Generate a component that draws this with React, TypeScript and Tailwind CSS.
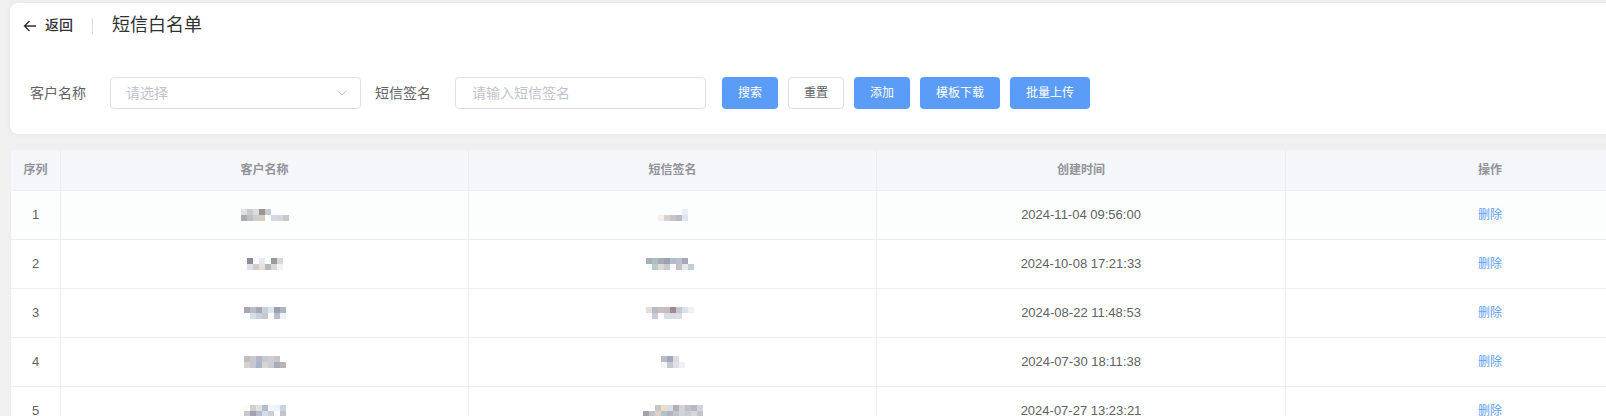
import { ChevronDown } from 'lucide-react';

type Cell = string | null;

const rows: { no: number; name: Cell[][]; sign: Cell[][]; time: string }[] = [
  {
    no: 1,
    name: [
      ['#e2e2e4', '#c9cbd0', '#dcdce0', '#9c9294', '#c8ccd2', null, null, null],
      ['#a9aab4', '#c2bfc2', '#cfcdd0', '#d5cdbd', null, '#d3dae2', '#d3d6de', '#c9c9cc'],
    ],
    sign: [
      [null, null, null, null, '#eaeef8'],
      ['#f6eeea', '#d8d0cc', '#c8c4c4', '#b8bcc4', '#e0e4ec'],
    ],
    time: '2024-11-04 09:56:00',
  },
  {
    no: 2,
    name: [
      ['#8e8e92', null, '#e6eaf0', null, '#9a9a9e', '#d4d8e0'],
      ['#dde2ee', '#d0ccd0', '#e8e0d4', '#b8b8bc', '#dcd8d4', '#f4f4f4'],
    ],
    sign: [
      ['#a8b0bc', '#b0bcc4', '#a4acb4', '#9ca0b0', '#b4bccc', '#b8c0d4', '#a8a8b4', null, null],
      [null, '#b8ccc8', '#dcd8d8', '#c4ccd0', null, '#c4c0c4', '#e4e8f0', '#c4ccd4', null],
    ],
    time: '2024-10-08 17:21:33',
  },
  {
    no: 3,
    name: [
      ['#aaa6ae', '#bcbcc4', '#a4a8b4', '#c4d0dc', '#dce4ec', '#9ca0ac', '#b0b4bc'],
      [null, '#d4dcec', '#c8d0e0', '#c8c8d0', null, '#b8bccc', '#eef2fa'],
    ],
    sign: [
      ['#e8dcd8', '#b4bcc8', '#c8c0c0', '#c4bcbc', '#a08890', '#c4c8d0', '#dce0e8', '#f0f0f4', null],
      [null, '#ccc8dc', null, '#d8dce4', '#d8dce4', '#dcdce4', null, null, null],
    ],
    time: '2024-08-22 11:48:53',
  },
  {
    no: 4,
    name: [
      ['#c0bcc0', '#c8c8d0', '#b4b8c4', '#c8c8d4', '#d0ccd0', '#c8c4c8', null],
      ['#d8d0cc', '#c8c8d4', '#aab4c8', '#d8d4d0', '#c8ccd4', '#a8acb8', '#bcb4b4'],
    ],
    sign: [
      ['#b8bcc8', '#a4a8b8', '#dcdce4', null],
      ['#f4f4f4', '#c4c8d0', '#e0e0e8', '#f0f0f4'],
    ],
    time: '2024-07-30 18:11:38',
  },
  {
    no: 5,
    name: [
      ['#fcfcf4', '#d0d0d4', '#e4e0dc', '#b4bcd0', '#f4f4f4', '#eef2fa', '#cad4e4'],
      ['#c8c8cc', '#a0a4b0', '#b8c0d0', '#d8dce8', '#c8d0d8', null, '#c0c4cc'],
    ],
    sign: [
      [null, null, '#c4c8c4', '#ecdcc8', '#dcdce4', '#b8acb4', '#d0d4dc', '#c4c0c8', '#b8b8c4', '#d0d4dc'],
      ['#a8a0a8', '#bcc4c8', '#dcd0c8', '#b8c0c8', '#b0b4c4', '#c0c4cc', '#d4d4d8', '#c8ccd4', '#d8d8dc', '#c0c4d0'],
    ],
    time: '2024-07-27 13:23:21',
  },
];

// pixelated (masked) content
function Mosaic({ cells }: { cells: Cell[][] }) {
  const cols = Math.max(...cells.map((r) => r.length));
  return (
    <svg width={cols * 6} height={cells.length * 6} className="block">
      {cells.map((r, y) =>
        r.map((c, x) =>
          c ? <rect key={`${x}-${y}`} x={x * 6} y={y * 6} width={6} height={6} fill={c} /> : null,
        ),
      )}
    </svg>
  );
}

const cols = 'grid grid-cols-[50px_408px_408px_409px_409px]';
const cell = 'flex items-center justify-center border-r border-[#ebeef5]';

export default function App() {
  return (
    <div
      className="h-[416px] w-full overflow-hidden bg-[#f0f0f0] pt-[3px] pl-[10px]"
      style={{ fontFamily: '"Liberation Sans", "Noto Sans CJK SC", sans-serif' }}
    >
      {/* Header card */}
      <div className="w-[1700px] rounded-lg bg-white pb-[25px] shadow-[0_0_6px_rgba(0,0,0,0.05)]">
        <div className="flex h-[45px] items-center pl-[13px]">
          <button className="flex items-center gap-[8px] text-[14px] font-medium text-[#303133]">
            <svg width="14" height="14" viewBox="0 0 14 14" fill="none" stroke="#303133" strokeWidth="1.4">
              <path d="M13 7H1.5M6.5 2L1.5 7l5 5" />
            </svg>
            返回
          </button>
          <div className="mx-[19px] h-[16px] w-px bg-[#dcdfe6]" />
          <h1 className="text-[18px] font-normal text-[#303133]">短信白名单</h1>
        </div>

        <div className="mt-[29px] flex items-center pl-[20px] text-[14px]">
          <span className="text-[#606266]">客户名称</span>
          <div className="ml-[24px] flex h-[32px] w-[251px] items-center justify-between rounded border border-[#dcdfe6] pr-[10px] pl-[15px]">
            <span className="text-[#c0c4cc]">请选择</span>
            <ChevronDown size={16} strokeWidth={1.4} className="text-[#c0c4cc]" />
          </div>
          <span className="ml-[14px] text-[#606266]">短信签名</span>
          <div className="ml-[24px] flex h-[32px] w-[251px] items-center rounded border border-[#dcdfe6] pl-[16px]">
            <span className="text-[#c0c4cc]">请输入短信签名</span>
          </div>
          <div className="ml-[16px] flex gap-[10px] text-[12px]">
            <button className="h-[32px] w-[56px] rounded bg-[#5a9cf8] text-white">搜索</button>
            <button className="h-[32px] w-[56px] rounded border border-[#dcdfe6] bg-white text-[#606266]">重置</button>
            <button className="h-[32px] w-[56px] rounded bg-[#5a9cf8] text-white">添加</button>
            <button className="h-[32px] w-[80px] rounded bg-[#5a9cf8] text-white">模板下载</button>
            <button className="h-[32px] w-[80px] rounded bg-[#5a9cf8] text-white">批量上传</button>
          </div>
        </div>
      </div>

      {/* Table */}
      <div className="mt-[16px] w-[1700px] border-l border-[#ebeef5] bg-white">
        <div className={`${cols} h-[41px] border-b border-[#ebeef5] bg-[#f5f6fa] text-[12px] font-bold text-[#909399]`}>
          <div className={cell}>序列</div>
          <div className={cell}>客户名称</div>
          <div className={cell}>短信签名</div>
          <div className={cell}>创建时间</div>
          <div className={cell}>操作</div>
        </div>
        {rows.map((r) => (
          <div
            key={r.no}
            className={`${cols} h-[49px] border-b border-[#ebeef5] text-[13px] text-[#606266] ${r.no === 1 ? 'bg-[#fbfefc]' : 'bg-white'}`}
          >
            <div className={cell}>{r.no}</div>
            <div className={cell}>
              <Mosaic cells={r.name} />
            </div>
            <div className={cell}>
              <Mosaic cells={r.sign} />
            </div>
            <div className={cell}>{r.time}</div>
            <div className={cell}>
              <span className="cursor-pointer text-[12px] text-[#5e9df8]">删除</span>
            </div>
          </div>
        ))}
      </div>
    </div>
  );
}
